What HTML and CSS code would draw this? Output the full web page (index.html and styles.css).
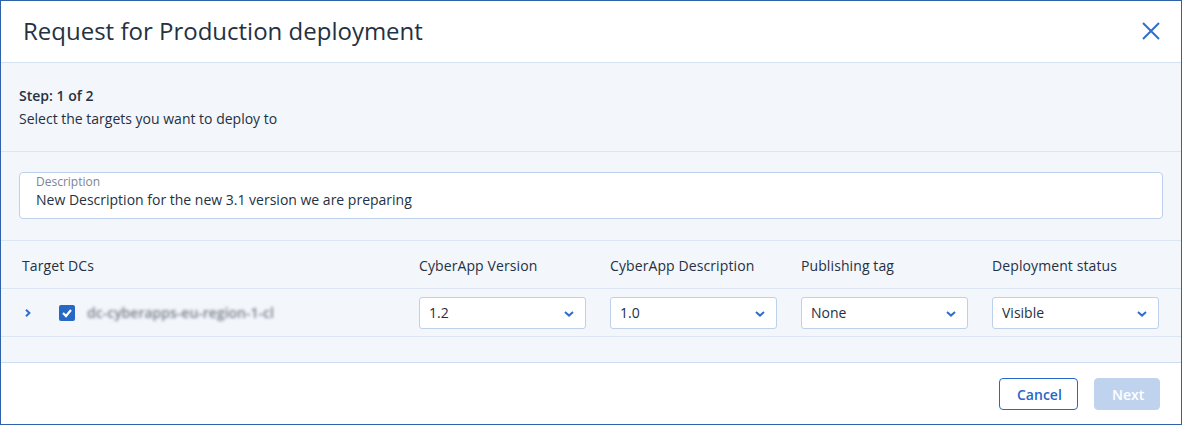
FILE: index.html
```html
<!DOCTYPE html>
<html lang="en">
<head>
<meta charset="utf-8">
<title>Request for Production deployment</title>
<link rel="stylesheet" href="styles.css">
</head>
<body>
<div class="dialog">
  <header class="dlg-header">
    <h1 class="dlg-title">Request for Production deployment</h1>
    <button class="close-btn" aria-label="Close">
      <svg width="18" height="18" viewBox="0 0 18 18"><path d="M1 1 L17 17 M17 1 L1 17" stroke="#2f6fcc" stroke-width="2" fill="none"/></svg>
    </button>
  </header>
  <section class="step">
    <div class="step-title">Step: 1 of 2</div>
    <div class="step-sub">Select the targets you want to deploy to</div>
  </section>
  <section class="desc-section">
    <div class="field">
      <div class="field-label">Description</div>
      <div class="field-value">New Description for the new 3.1 version we are preparing</div>
    </div>
  </section>
  <section class="table">
    <div class="row head">
      <div class="cell">Target DCs</div>
      <div class="cell">CyberApp Version</div>
      <div class="cell">CyberApp Description</div>
      <div class="cell">Publishing tag</div>
      <div class="cell">Deployment status</div>
    </div>
    <div class="row body">
      <div class="cell first">
        <svg class="expand" width="6" height="8" viewBox="0 0 6 8"><path d="M1 0.8 L4.4 4 L1 7.2" stroke="#2f6fcc" stroke-width="2" fill="none"/></svg>
        <span class="check"><svg width="12" height="10" viewBox="0 0 12 10"><path d="M2 5 L5 8 L10 2" stroke="#fff" stroke-width="2.2" fill="none"/></svg></span>
        <span class="masked">dc-cyberapps-eu-region-1-cl</span>
      </div>
      <div class="cell"><div class="select"><span>1.2</span><svg width="10" height="6" viewBox="0 0 10 6"><path d="M1 1 L5 4.6 L9 1" stroke="#2f6fcc" stroke-width="2" fill="none"/></svg></div></div>
      <div class="cell"><div class="select"><span>1.0</span><svg width="10" height="6" viewBox="0 0 10 6"><path d="M1 1 L5 4.6 L9 1" stroke="#2f6fcc" stroke-width="2" fill="none"/></svg></div></div>
      <div class="cell"><div class="select"><span>None</span><svg width="10" height="6" viewBox="0 0 10 6"><path d="M1 1 L5 4.6 L9 1" stroke="#2f6fcc" stroke-width="2" fill="none"/></svg></div></div>
      <div class="cell"><div class="select"><span>Visible</span><svg width="10" height="6" viewBox="0 0 10 6"><path d="M1 1 L5 4.6 L9 1" stroke="#2f6fcc" stroke-width="2" fill="none"/></svg></div></div>
    </div>
    <div class="table-spacer"></div>
  </section>
  <footer class="dlg-footer">
    <button class="btn btn-secondary">Cancel</button>
    <button class="btn btn-primary" disabled>Next</button>
  </footer>
</div>
</body>
</html>
```

FILE: styles.css
```css
* { box-sizing: border-box; }
html, body { margin: 0; padding: 0; }
body {
  font-family: "Open Sans", "Noto Sans", sans-serif;
  color: #243143;
  background: #fff;
}
.dialog {
  width: 1182px;
  height: 425px;
  border: 1px solid #2f62aa;
  display: flex;
  flex-direction: column;
  background: #f3f6fb;
}
.dlg-header {
  height: 62px;
  flex: none;
  background: #fff;
  border-bottom: 1px solid #d5e2f4;
  display: flex;
  align-items: center;
  justify-content: space-between;
  padding: 0 16px 0 22px;
}
.dlg-title {
  margin: 0;
  font-size: 24px;
  font-weight: 400;
  line-height: 32px;
  color: #243143;
  padding-bottom: 1px;
}
.close-btn {
  border: 0;
  background: none;
  padding: 4px;
  width: 28px;
  height: 28px;
  display: flex;
  align-items: center;
  justify-content: center;
  margin-bottom: 1px;
}
.step {
  height: 89px;
  flex: none;
  border-bottom: 1px solid #dbe5f3;
  padding: 21px 18px 0;
  font-size: 14px;
  line-height: 23px;
}
.step-title { font-weight: 600; }
.step-sub { font-weight: 400; }
.desc-section {
  height: 89px;
  flex: none;
  border-bottom: 1px solid #dbe5f3;
  padding: 20px 18px 0;
}
.field {
  height: 47px;
  background: #fff;
  border: 1px solid #bdd0ec;
  border-radius: 4px;
  padding: 1px 16px 0;
}
.field-label {
  font-size: 12px;
  line-height: 16px;
  color: #7b8594;
}
.field-value {
  font-size: 14px;
  line-height: 20px;
}
.table { flex: 1; display: flex; flex-direction: column; }
.row {
  display: grid;
  grid-template-columns: 374px repeat(4, 167px);
  column-gap: 24px;
  padding: 0 22px 0 20px;
  height: 48px;
  border-bottom: 1px solid #dbe5f3;
  align-items: center;
}
.row.head .cell {
  font-size: 14px;
  font-weight: 500;
  line-height: 20px;
  padding-top: 2px;
  letter-spacing: 0.1px;
}
.row.head .cell:first-child { padding-left: 1px; }
.cell.first {
  display: flex;
  align-items: center;
}
.expand { margin-left: 4px; margin-top: 1px; }
.check {
  width: 16px;
  height: 16px;
  background: #2668c5;
  border-radius: 2px;
  margin-left: 28px;
  display: flex;
  align-items: center;
  justify-content: center;
}
.masked {
  margin-left: 12px;
  font-size: 14px;
  font-weight: 600;
  color: #7a808c;
  filter: blur(1.4px);
  letter-spacing: 0;
}
.select {
  height: 32px;
  background: #fff;
  border: 1px solid #bdd0ec;
  border-radius: 3px;
  display: flex;
  align-items: center;
  justify-content: space-between;
  padding: 0 11px 0 9px;
  font-size: 14px;
}
.select svg { margin-top: 2px; }
.table-spacer { flex: 1; }
.dlg-footer {
  height: 62px;
  flex: none;
  background: #fff;
  border-top: 1px solid #cddcf2;
  display: flex;
  justify-content: flex-end;
  align-items: center;
  padding: 1px 21px 0 0;
  gap: 16px;
}
.btn {
  height: 32px;
  font-family: "Open Sans", "Noto Sans", sans-serif;
  font-size: 14px;
  font-weight: 600;
  border-radius: 4px;
  padding: 0 17px;
}
.btn-secondary {
  background: #fff;
  border: 1px solid #2668c5;
  color: #2668c5;
  width: 79px;
}
.btn-primary {
  background: #bfd3ee;
  border: 1px solid #bfd3ee;
  color: #fff;
  width: 66px;
}
```
